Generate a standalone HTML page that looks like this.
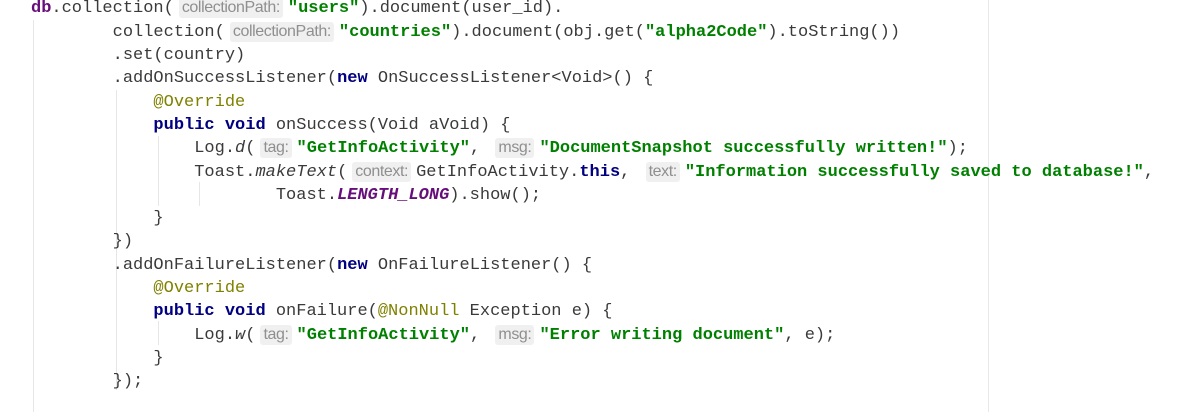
<!DOCTYPE html>
<html><head><meta charset="utf-8"><style>
body{margin:0;width:1188px;height:412px;background:#fff;position:relative;overflow:hidden}
.l{position:absolute;left:31px;white-space:pre;font-family:"Liberation Mono",monospace;font-size:17px;line-height:23.3px;color:#3a3a3a;height:23.3px}
.k{color:#000080;font-weight:bold}
.s{color:#008000;font-weight:bold}
.a{color:#808000}
.p{color:#660e7a;font-weight:bold}
.pi{color:#660e7a;font-weight:bold;font-style:italic}
.i{font-style:italic}
.h{display:inline-block;font-family:"Liberation Sans",sans-serif;font-size:16px;color:#8f8f8f;background:#f0f0f0;border-radius:3px;padding:0 3px;margin:0 5px 0 5px;line-height:20px;vertical-align:0px;letter-spacing:-0.4px}
.g{position:absolute;width:1px;background:#e6e6e6}
</style></head><body>
<div class="g" style="left:33px;top:20px;height:392px"></div>
<div class="g" style="left:116px;top:90px;height:300px"></div>
<div class="g" style="left:158px;top:136px;height:70px"></div>
<div class="g" style="left:199px;top:182px;height:24px"></div>
<div class="g" style="left:158px;top:321px;height:24px"></div>
<div class="g" style="left:988px;top:0;height:412px;background:#e8e8e8"></div>

<div class="l" style="top:-2.6px"><span class="p">db</span>.collection(<span class="h">collectionPath:</span><span class="s">"users"</span>).document(user_id).</div>
<div class="l" style="top:20.7px">        collection(<span class="h">collectionPath:</span><span class="s">"countries"</span>).document(obj.get(<span class="s">"alpha2Code"</span>).toString())</div>
<div class="l" style="top:44px">        .set(country)</div>
<div class="l" style="top:67.3px">        .addOnSuccessListener(<span class="k">new</span> OnSuccessListener&lt;Void&gt;() {</div>
<div class="l" style="top:90.6px">            <span class="a">@Override</span></div>
<div class="l" style="top:113.9px">            <span class="k">public void</span> onSuccess(Void aVoid) {</div>
<div class="l" style="top:137.2px">                Log.<span class="i">d</span>(<span class="h">tag:</span><span class="s">"GetInfoActivity"</span>, <span class="h">msg:</span><span class="s">"DocumentSnapshot successfully written!"</span>);</div>
<div class="l" style="top:160.5px">                Toast.<span class="i">makeText</span>(<span class="h">context:</span>GetInfoActivity.<span class="k">this</span>, <span class="h">text:</span><span class="s">"Information successfully saved to database!"</span>,</div>
<div class="l" style="top:183.8px">                        Toast.<span class="pi">LENGTH_LONG</span>).show();</div>
<div class="l" style="top:207.1px">            }</div>
<div class="l" style="top:230.4px">        })</div>
<div class="l" style="top:253.7px">        .addOnFailureListener(<span class="k">new</span> OnFailureListener() {</div>
<div class="l" style="top:277px">            <span class="a">@Override</span></div>
<div class="l" style="top:300.3px">            <span class="k">public void</span> onFailure(<span class="a">@NonNull</span> Exception e) {</div>
<div class="l" style="top:323.6px">                Log.<span class="i">w</span>(<span class="h">tag:</span><span class="s">"GetInfoActivity"</span>, <span class="h">msg:</span><span class="s">"Error writing document"</span>, e);</div>
<div class="l" style="top:346.9px">            }</div>
<div class="l" style="top:370.2px">        });</div>
</body></html>
